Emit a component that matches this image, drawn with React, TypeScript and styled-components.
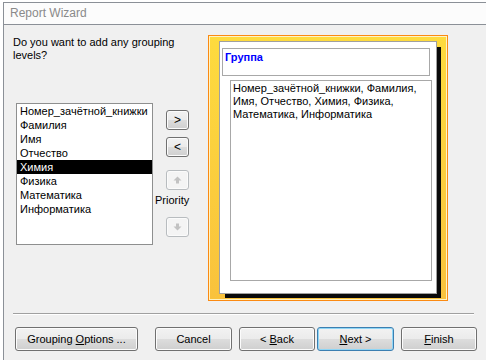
import * as React from "react";
import styled, { createGlobalStyle } from "styled-components";

const Global = createGlobalStyle`
    html, body {
        margin: 0;
        padding: 0;
        background: #ffffff;
        overflow: hidden;
    }
    body {
        font-family: "Liberation Sans", Arial, sans-serif;
        font-size: 11px;
        color: #000;
    }
`;

const Window = styled.div`
    margin: 2px 0 0 3px;
    width: 482px;
    height: 358px;
    border-left: 1px solid #8b9097;
    border-top: 1px solid #8b9097;
    background: #f0f0f0;
    overflow: hidden;
`;

const TitleBar = styled.div`
    height: 21px;
    line-height: 21px;
    padding-left: 6px;
    background: #fcfcfc;
    border-bottom: 1px solid #8b9097;
    color: #8a8a8a;
    font-size: 12px;
`;

const Body = styled.div`
    padding: 10px 0 0 9px;
`;

const Main = styled.div`
    display: flex;
    align-items: flex-start;
`;

const LeftCol = styled.div`
    width: 140px;
`;

const Question = styled.div`
    padding-top: 1px;
    line-height: 13px;
    white-space: nowrap;
`;

const ListBox = styled.div`
    margin: 41px 0 0 3px;
    width: 135px;
    height: 140px;
    border: 1px solid #8e8f8f;
    background: #fff;
`;

const Item = styled.div<{ $selected?: boolean }>`
    height: 14px;
    line-height: 14px;
    padding-left: 3px;
    white-space: nowrap;
    background: ${({ $selected }) => ($selected ? "#000" : "transparent")};
    color: ${({ $selected }) => ($selected ? "#fff" : "#000")};
`;

const MiddleCol = styled.div`
    margin-left: 2px;
    width: 40px;
    display: flex;
    flex-direction: column;
    align-items: flex-start;
    padding-top: 75px;
`;

const SmallButton = styled.div<{ $disabled?: boolean; $gap?: number }>`
    box-sizing: border-box;
    margin: ${({ $gap }) => $gap ?? 0}px 0 0 11px;
    width: 23px;
    height: 20px;
    display: flex;
    align-items: center;
    justify-content: center;
    border-radius: 3px;
    border: 1px solid ${({ $disabled }) => ($disabled ? "#b8bcbf" : "#707070")};
    background: ${({ $disabled }) =>
        $disabled
            ? "#f4f4f4"
            : "linear-gradient(#f2f2f2 0%, #ebebeb 50%, #dddddd 50%, #cfcfcf 100%)"};
    box-shadow: inset 0 0 0 1px ${({ $disabled }) => ($disabled ? "#fbfbfb" : "#fcfcfc")};
    font-size: 12px;
    line-height: 1;
`;

const PriorityLabel = styled.div`
    margin-top: 4px;
    line-height: 13px;
`;

const Frame = styled.div`
    box-sizing: border-box;
    margin-left: 13px;
    width: 240px;
    height: 266px;
    border: 1px solid #fb8a12;
    box-shadow: inset 0 0 0 1px #fff3c4;
    background: linear-gradient(#fedb3e, #f9c23c);
    padding: 5px 0 0 10px;
`;

const Page = styled.div`
    box-sizing: border-box;
    width: 218px;
    height: 253px;
    border: 1px solid #a0a0a0;
    background: #fff;
    box-shadow: 5px 5px 0 -1px #0a0a0a;
    padding: 6px 0 0 2px;
`;

const HeaderBox = styled.div`
    box-sizing: border-box;
    width: 208px;
    height: 28px;
    border: 1px solid #a8a8a8;
    padding: 2px 0 0 2px;
    line-height: 13px;
    font-weight: bold;
    color: #0000ff;
`;

const DetailBox = styled.div`
    box-sizing: border-box;
    margin: 4px 0 0 8px;
    width: 202px;
    height: 201px;
    border: 1px solid #a8a8a8;
    padding: 1px 0 0 2px;
    line-height: 13px;
    color: #000;
`;

const Separator = styled.div`
    margin: 12px 0 0 0;
    width: 461px;
    border-top: 1px solid #a0a0a0;
    border-bottom: 1px solid #ffffff;
`;

const ButtonRow = styled.div`
    display: flex;
    margin: 12px 0 0 2px;
`;

const Button = styled.div<{ $width: number; $gap: number; $default?: boolean }>`
    box-sizing: border-box;
    margin-left: ${({ $gap }) => $gap}px;
    width: ${({ $width }) => $width}px;
    height: 24px;
    display: flex;
    align-items: center;
    justify-content: center;
    border-radius: 3px;
    border: 1px solid ${({ $default }) => ($default ? "#3c7fb1" : "#707070")};
    background: linear-gradient(#f2f2f2 0%, #ebebeb 50%, #dddddd 50%, #cfcfcf 100%);
    box-shadow: inset 0 0 0 1px ${({ $default }) => ($default ? "#8fd6f6" : "#fcfcfc")};
    white-space: pre;
`;

const Key = styled.span`
    text-decoration: underline;
`;

const Arrow = ({ down }: { down?: boolean }) => (
    <svg width="9" height="8" viewBox="0 0 9 8" style={down ? { transform: "rotate(180deg)" } : undefined}>
        <path d="M4.5 0.5 L8.5 4.5 H6 V7.5 H3 V4.5 H0.5 Z" fill="#c2c2c2" />
    </svg>
);

const fields = [
    "Номер_зачётной_книжки",
    "Фамилия",
    "Имя",
    "Отчество",
    "Химия",
    "Физика",
    "Математика",
    "Информатика",
];

export default function App() {
    return (
        <>
            <Global />
            <Window>
                <TitleBar>Report Wizard</TitleBar>
                <Body>
                    <Main>
                        <LeftCol>
                            <Question>
                                Do you want to add any grouping
                                <br />
                                levels?
                            </Question>
                            <ListBox>
                                {fields.map((f) => (
                                    <Item key={f} $selected={f === "Химия"}>
                                        {f}
                                    </Item>
                                ))}
                            </ListBox>
                        </LeftCol>
                        <MiddleCol>
                            <SmallButton>&gt;</SmallButton>
                            <SmallButton $gap={7}>&lt;</SmallButton>
                            <SmallButton $disabled $gap={13}>
                                <Arrow />
                            </SmallButton>
                            <PriorityLabel>Priority</PriorityLabel>
                            <SmallButton $disabled $gap={10}>
                                <Arrow down />
                            </SmallButton>
                        </MiddleCol>
                        <Frame>
                            <Page>
                                <HeaderBox>Группа</HeaderBox>
                                <DetailBox>
                                    Номер_зачётной_книжки, Фамилия,
                                    <br />
                                    Имя, Отчество, Химия, Физика,
                                    <br />
                                    Математика, Информатика
                                </DetailBox>
                            </Page>
                        </Frame>
                    </Main>
                    <Separator />
                    <ButtonRow>
                        <Button $width={123} $gap={0}>
                            <span>
                                Grouping <Key>O</Key>ptions ...
                            </span>
                        </Button>
                        <Button $width={77} $gap={17}>
                            <span>Cancel</span>
                        </Button>
                        <Button $width={76} $gap={7}>
                            <span>
                                {"< "}
                                <Key>B</Key>ack
                            </span>
                        </Button>
                        <Button $width={77} $gap={2} $default>
                            <span>
                                <Key>N</Key>
                                {"ext >"}
                            </span>
                        </Button>
                        <Button $width={76} $gap={7}>
                            <span>
                                <Key>F</Key>inish
                            </span>
                        </Button>
                    </ButtonRow>
                </Body>
            </Window>
        </>
    );
}
